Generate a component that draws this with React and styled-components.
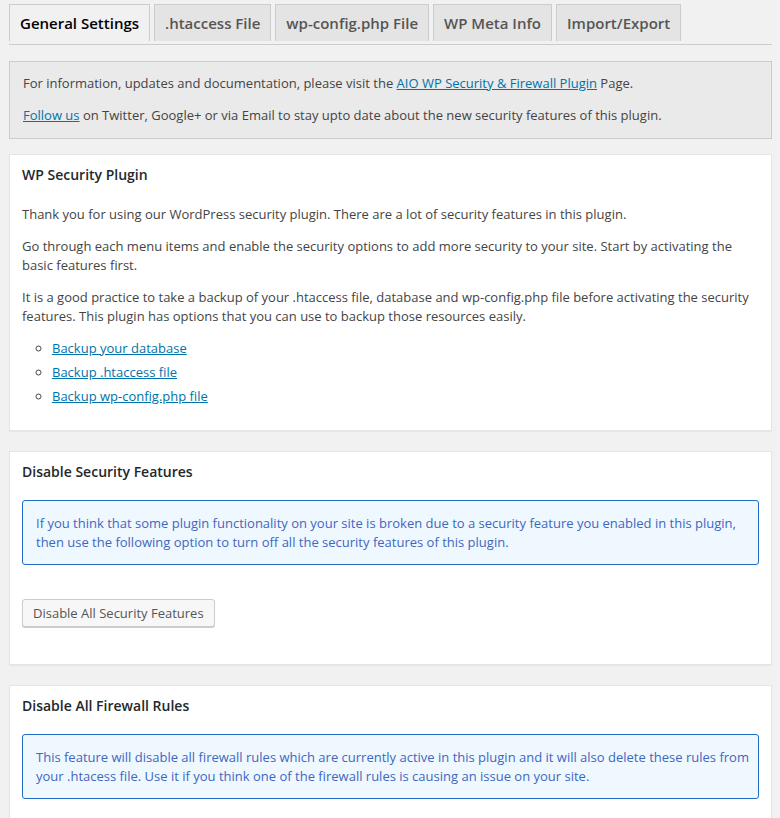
import styled, { createGlobalStyle } from "styled-components"

const GlobalStyle = createGlobalStyle`
    html, body {
        margin: 0;
        padding: 0;
        overflow: hidden;
        background: #f1f1f1;
    }
    body {
        font-family: "Open Sans", "Noto Sans", sans-serif;
        font-size: 13px;
        line-height: 19px;
        color: #444;
    }
    * {
        box-sizing: border-box;
    }
`

const tabs = ["General Settings", ".htaccess File", "wp-config.php File", "WP Meta Info", "Import/Export"]

const backupLinks = ["Backup your database", "Backup .htaccess file", "Backup wp-config.php file"]

const App = () => {
    return (
      <Wrap>
          <GlobalStyle />
          <TabBar>
              {tabs.map((t, i) => (
                  <Tab key={t} $active={i === 0}>{t}</Tab>
              ))}
          </TabBar>

          <InfoBox>
              <p>
                  For information, updates and documentation, please visit the{" "}
                  <Link href="#">AIO WP Security &amp; Firewall Plugin</Link> Page.
              </p>
              <p>
                  <Link href="#">Follow us</Link> on Twitter, Google+ or via Email to stay upto date about the new security features of this plugin.
              </p>
          </InfoBox>

          <Card>
              <CardTitle>WP Security Plugin</CardTitle>
              <CardBody $bottom={12}>
                  <p>Thank you for using our WordPress security plugin. There are a lot of security features in this plugin.</p>
                  <p>Go through each menu items and enable the security options to add more security to your site. Start by activating the basic features first.</p>
                  <p>It is a good practice to take a backup of your .htaccess file, database and wp-config.php file before activating the security features. This plugin has options that you can use to backup those resources easily.</p>
                  <LinkList>
                      {backupLinks.map(l => (
                          <li key={l}><Link href="#">{l}</Link></li>
                      ))}
                  </LinkList>
              </CardBody>
          </Card>

          <Card>
              <CardTitle>Disable Security Features</CardTitle>
              <CardBody>
                  <BlueBox>
                      <p>If you think that some plugin functionality on your site is broken due to a security feature you enabled in this plugin, then use the following option to turn off all the security features of this plugin.</p>
                  </BlueBox>
                  <ButtonRow>
                      <Button type="button">Disable All Security Features</Button>
                  </ButtonRow>
              </CardBody>
          </Card>

          <Card>
              <CardTitle>Disable All Firewall Rules</CardTitle>
              <CardBody>
                  <BlueBox>
                      <p>This feature will disable all firewall rules which are currently active in this plugin and it will also delete these rules from your .htacess file. Use it if you think one of the firewall rules is causing an issue on your site.</p>
                  </BlueBox>
                  <ButtonRow>
                      <Button type="button">Disable All Firewall Rules</Button>
                  </ButtonRow>
              </CardBody>
          </Card>
      </Wrap>
    )
}

export default App

const Wrap = styled.div`
    padding: 4px 8px 0 9px;
`

const TabBar = styled.nav`
    display: flex;
    gap: 4px;
    padding-bottom: 3px;
    border-bottom: 1px solid #ccc;
`

const Tab = styled.div`
    height: 37px;
    padding: 0 10px;
    border: 1px solid #ccc;
    border-bottom: none;
    background: ${p => (p.$active ? "#f1f1f1" : "#e4e4e4")};
    color: ${p => (p.$active ? "#000" : "#555")};
    font-size: 15px;
    font-weight: 600;
    line-height: 36px;
    white-space: nowrap;
    cursor: pointer;
`

const InfoBox = styled.div`
    margin-top: 16px;
    padding: 0 13px;
    background: #eaeaea;
    border: 1px solid #ccc;

    p {
        margin: 12px 0 13px;
    }
`

const Link = styled.a`
    color: #0073aa;
    text-decoration: underline;
`

const Card = styled.div`
    margin-top: 15px;
    background: #fff;
    border: 1px solid #e5e5e5;
    box-shadow: 0 1px 1px rgba(0, 0, 0, 0.04);

    & + & {
        margin-top: 20px;
    }
`

const CardTitle = styled.h3`
    margin: 0;
    padding: 10px 12px 7px;
    font-size: 14px;
    font-weight: 600;
    line-height: 20px;
    color: #23282d;
`

const CardBody = styled.div`
    padding: 0 12px ${p => p.$bottom ?? 6}px;

    p {
        margin: 13px 0;
    }
`

const LinkList = styled.ul`
    margin: 13px 0;
    padding-left: 30px;
    list-style: circle;

    li {
        line-height: 18px;
        margin-bottom: 6px;
    }
`

const BlueBox = styled.div`
    margin: 11px 0 15px;
    padding: 0 6px 0 13px;
    background: #f0f8ff;
    border: 1px solid #1f6cc4;
    border-radius: 3px;
    color: #3d67c0;

    && p {
        margin: 13px 0;
        line-height: 18.5px;
    }
`

const ButtonRow = styled.div`
    padding: 19px 0 31px;
`

const Button = styled.button`
    height: 28px;
    padding: 0 10px 1px;
    font-family: inherit;
    font-size: 13px;
    line-height: 26px;
    color: #555;
    background: #f7f7f7;
    border: 1px solid #ccc;
    border-radius: 3px;
    box-shadow: 0 1px 0 #ccc;
    cursor: pointer;
`
